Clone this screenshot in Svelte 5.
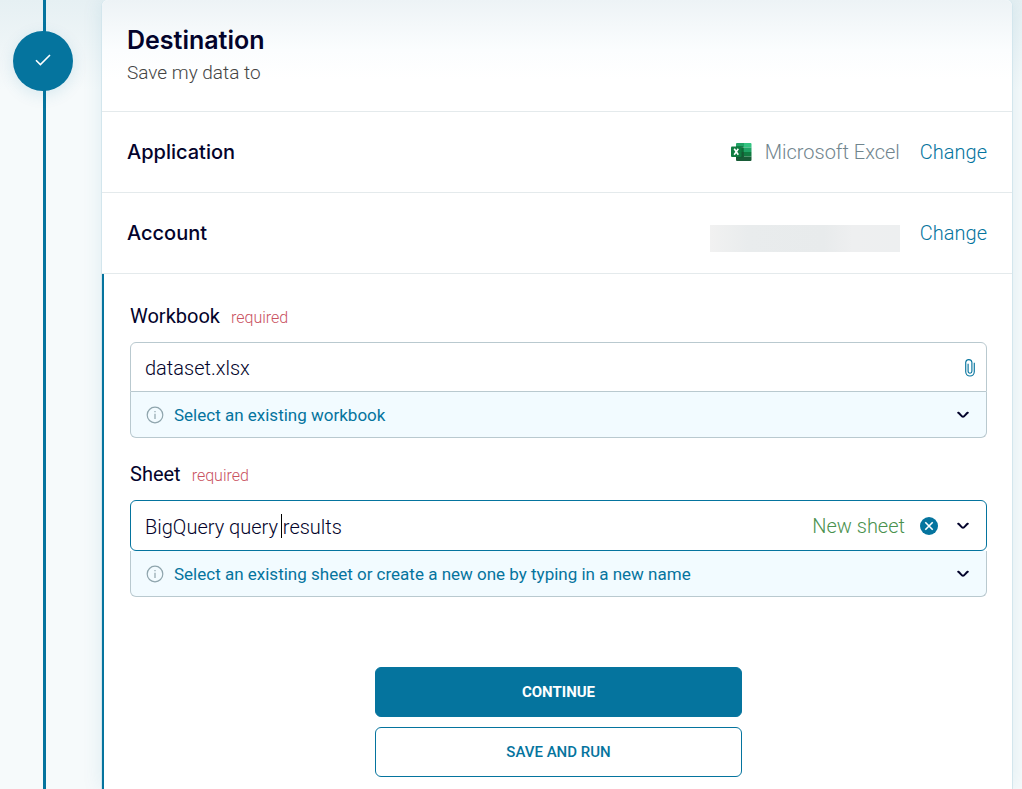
<script>
  let workbook = "dataset.xlsx";
  let sheet = "BigQuery query results";

  function clearSheet() {
    sheet = "";
  }
</script>

{#snippet chevron()}
  <svg class="chevron" viewBox="0 0 12 8" aria-hidden="true">
    <path d="M1.2 1.7 C3 2.6 4.6 5.8 6 5.8 S9 2.6 10.8 1.7" />
  </svg>
{/snippet}

{#snippet info()}
  <svg class="info" viewBox="0 0 18 18" aria-hidden="true">
    <circle cx="9" cy="9" r="7.8" />
    <path d="M9 7.8V13M9 5V6.2" />
  </svg>
{/snippet}

<div class="page">
  <div class="rail">
    <div class="step">
      <svg viewBox="0 0 16 12" aria-hidden="true">
        <path d="M1 6.2L5.4 10.6L15 1" />
      </svg>
    </div>
  </div>

  <main class="card">
    <header>
      <h1>Destination</h1>
      <p>Save my data to</p>
    </header>

    <div class="row">
      <h2>Application</h2>
      <div class="value">
        <svg class="excel" viewBox="0 0 21 18" aria-hidden="true">
          <path fill="#21a366" d="M6 0H13V4.5H5V1Q5 0 6 0Z" />
          <path fill="#33c481" d="M13 0H19.5Q20.5 0 20.5 1V4.5H13Z" />
          <path fill="#107c41" d="M5 4.5H13V9H5Z" />
          <path fill="#21a366" d="M13 4.5H20.5V9H13Z" />
          <path fill="#185c37" d="M5 9H13V13.5H20.5V17Q20.5 18 19.5 18H6Q5 18 5 17Z" />
          <path fill="#107c41" d="M13 9H20.5V13.5H13Z" />
          <rect x="5" y="3" width="7" height="12" fill="#0b5a30" opacity=".5" />
          <rect y="3.5" width="10.5" height="10.5" rx="1" fill="#107c41" />
          <path stroke="#fff" stroke-width="1.6" d="M3.2 5.8L7.3 11.8M7.3 5.8L3.2 11.8" />
        </svg>
        <span>Microsoft Excel</span>
        <a href="#application">Change</a>
      </div>
    </div>

    <div class="row">
      <h2>Account</h2>
      <div class="value">
        <div class="redacted"></div>
        <a href="#account">Change</a>
      </div>
    </div>

    <section>
      <div class="field">
        <div class="label">
          <label for="workbook">Workbook</label>
          <span>required</span>
        </div>
        <div class="control">
          <input id="workbook" type="text" bind:value={workbook} />
          <button class="icon clip" aria-label="Attach">
            <svg viewBox="0 0 12 20" aria-hidden="true">
              <path
                d="M10.5 5V14.5A4.5 4.5 0 0 1 1.5 14.5V4.5A3.3 3.3 0 0 1 8 4.5V14A2 2 0 0 1 4 14V6"
              />
            </svg>
          </button>
        </div>
        <button class="help">
          {@render info()}
          <span>Select an existing workbook</span>
          {@render chevron()}
        </button>
      </div>

      <div class="field">
        <div class="label">
          <label for="sheet">Sheet</label>
          <span>required</span>
        </div>
        <div class="control active">
          <input id="sheet" type="text" bind:value={sheet} />
          <i class="caret"></i>
          <span class="state">New sheet</span>
          <button class="icon clear" aria-label="Clear" on:click={clearSheet}>
            <svg viewBox="0 0 18 18" aria-hidden="true">
              <circle cx="9" cy="9" r="9" />
              <path d="M5.3 5.3L12.7 12.7M12.7 5.3L5.3 12.7" />
            </svg>
          </button>
          <button class="icon" aria-label="Open list">{@render chevron()}</button>
        </div>
        <button class="help">
          {@render info()}
          <span>Select an existing sheet or create a new one by typing in a new name</span>
          {@render chevron()}
        </button>
      </div>

      <div class="actions">
        <button class="primary">CONTINUE</button>
        <button>SAVE AND RUN</button>
      </div>
    </section>
  </main>
</div>

<style>
  :global(body) {
    margin: 0;
  }
  .page,
  .page * {
    box-sizing: border-box;
  }
  .page {
    display: flex;
    min-height: 100vh;
    padding-right: 9px;
    background: linear-gradient(#e6f0f3, #f6fafb 90px);
    color: #03032b;
    font-family: Roboto, "Liberation Sans", sans-serif;
    font-size: 20px;
    font-weight: 300;
    overflow: hidden;
  }
  .rail {
    flex: none;
    width: 101px;
    padding: 31px 0 0 13px;
    background: linear-gradient(#05749e, #05749e) 43px 0 / 3px 100% no-repeat;
  }
  .step {
    display: flex;
    align-items: center;
    justify-content: center;
    width: 60px;
    height: 60px;
    padding-bottom: 2px;
    border-radius: 50%;
    background: #05749e;
    box-shadow: 0 4px 16px rgba(5, 116, 158, 0.12);
  }
  .step svg {
    width: 16px;
    height: 12px;
    fill: none;
    stroke: #fff;
    stroke-width: 1.6;
  }

  .card {
    display: flex;
    flex-direction: column;
    flex: 1;
    min-width: 0;
    border: 1px solid #d3e6ed;
    border-width: 0 1px;
    border-radius: 6px 6px 0 0;
    background: #fff;
    box-shadow: 0 0 20px rgba(5, 116, 158, 0.1);
  }
  header {
    height: 112px;
    padding: 24px 25px 0;
    border-bottom: 1px solid #e4eaec;
    border-radius: 6px 6px 0 0;
    background: linear-gradient(#edf3f6, #fbfdfe 50px, #fff 80px);
  }
  h1,
  h2 {
    margin: 0;
    font-family: Inter, "Open Sans", sans-serif;
    font-weight: 500;
  }
  h1 {
    font-size: 25px;
    font-weight: 600;
    line-height: 32px;
  }
  h2 {
    font-size: 20px;
  }
  p {
    margin: 4px 0 0;
    color: #444;
    font-size: 19px;
    line-height: 26px;
  }
  .row {
    display: flex;
    align-items: center;
    justify-content: space-between;
    height: 81px;
    padding: 0 25px;
    border-bottom: 1px solid #e4eaec;
  }
  .value {
    display: flex;
    align-items: center;
    color: #71858e;
  }
  a {
    margin-left: 20px;
    color: #05749e;
    text-decoration: none;
  }
  .excel {
    width: 21px;
    height: 18px;
    margin-right: 13px;
    fill: none;
  }
  .redacted {
    width: 190px;
    height: 27px;
    margin-top: 11px;
    background: linear-gradient(90deg, #f1f1f1, #e9eced 20%, #e8ebec 60%, #eeeff0 75%, #edeff0);
  }

  section {
    flex: 1;
    padding: 29px 25px 12px 26px;
    border-left: 2px solid #05749e;
  }
  .field + .field {
    margin-top: 23px;
  }
  .label {
    display: flex;
    align-items: baseline;
    gap: 11px;
    height: 26px;
    margin-bottom: 13px;
    line-height: 26px;
  }
  .label label {
    font-weight: 400;
  }
  .label span {
    color: #c9525f;
    font-size: 16px;
  }
  button {
    font: inherit;
    cursor: pointer;
  }
  .control {
    position: relative;
    display: flex;
    align-items: center;
    height: 50px;
    padding: 0 17px 0 14px;
    border: 1px solid #b9c9cf;
    border-radius: 6px 6px 0 0;
  }
  .control.active {
    height: 51px;
    border-color: #05749e;
    border-radius: 6px;
  }
  input {
    flex: 1;
    min-width: 0;
    padding: 2px 0 0;
    border: 0;
    outline: 0;
    background: none;
    color: inherit;
    font: inherit;
  }
  .caret {
    position: absolute;
    top: 13px;
    left: 150px;
    width: 1px;
    height: 24px;
    background: #000;
  }
  .state {
    margin-right: 15px;
    color: #4a914e;
  }
  .icon {
    display: flex;
    padding: 0;
    border: 0;
    background: none;
  }
  .clip {
    margin-right: -7px;
  }
  .clip svg {
    width: 12px;
    height: 19px;
    fill: none;
    stroke: #05749e;
    stroke-width: 1.2;
  }
  .clear {
    margin-right: 19px;
  }
  .clear svg {
    width: 18px;
    height: 18px;
    fill: #05749e;
    stroke: none;
  }
  .clear path {
    stroke: #fff;
    stroke-width: 1.6;
  }
  .chevron {
    width: 12px;
    height: 8px;
    fill: none;
    stroke: #03032b;
    stroke-width: 2;
    stroke-linecap: round;
  }
  .help {
    display: flex;
    align-items: center;
    width: 100%;
    height: 46px;
    padding: 0 17px 0 15px;
    border: 1px solid #b9c9cf;
    border-top: 0;
    border-radius: 0 0 6px 6px;
    background: #f2fbff;
    color: #05749e;
    font-size: 17px;
    font-weight: 400;
    text-align: left;
  }
  .help span {
    flex: 1;
  }
  .info {
    width: 18px;
    height: 18px;
    margin-right: 10px;
    fill: none;
    stroke: #8fa5ad;
    stroke-width: 1.2;
  }

  .actions {
    display: flex;
    flex-direction: column;
    gap: 10px;
    max-width: 367px;
    margin: 70px auto 0;
  }
  .actions button {
    height: 50px;
    border: 1px solid #05749e;
    border-radius: 6px;
    background: #fff;
    color: #05749e;
    font-size: 15px;
    font-weight: 500;
  }
  .actions .primary {
    background: #05749e;
    color: #fff;
    font-weight: 700;
  }
</style>
